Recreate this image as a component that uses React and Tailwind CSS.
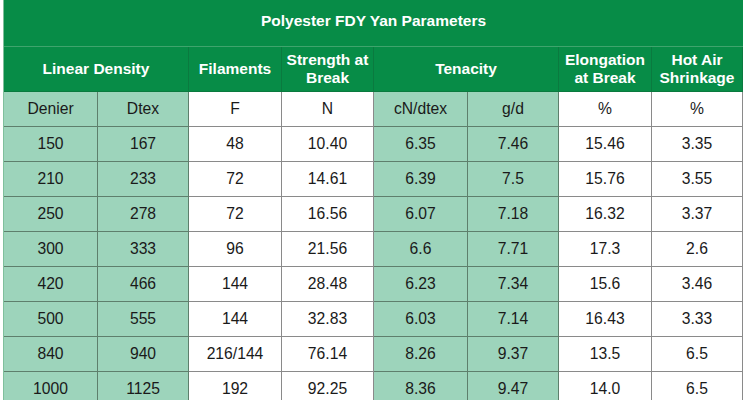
import React from "react";

const rows = [
  ["150", "167", "48", "10.40", "6.35", "7.46", "15.46", "3.35"],
  ["210", "233", "72", "14.61", "6.39", "7.5", "15.76", "3.55"],
  ["250", "278", "72", "16.56", "6.07", "7.18", "16.32", "3.37"],
  ["300", "333", "96", "21.56", "6.6", "7.71", "17.3", "2.6"],
  ["420", "466", "144", "28.48", "6.23", "7.34", "15.6", "3.46"],
  ["500", "555", "144", "32.83", "6.03", "7.14", "16.43", "3.33"],
  ["840", "940", "216/144", "76.14", "8.26", "9.37", "13.5", "6.5"],
  ["1000", "1125", "192", "92.25", "8.36", "9.47", "14.0", "6.5"],
];

const green = [0, 1, 4, 5];

const hdr =
  "h-[45px] bg-[#078c47] border-r border-b border-[#0a7a3f] flex items-center justify-center text-center text-white font-bold text-[15.5px] leading-[18px]";

const gCell =
  "h-[35px] bg-[#9dd4bb] border-r border-b border-[#5e7f6c] flex items-center justify-center text-[#1a1a1a]";
const wCell =
  "h-[35px] bg-white border-r border-b border-[#8a8a8a] flex items-center justify-center text-[#1a1a1a]";

export default function App() {
  return (
    <div className="w-[750px] h-[400px] overflow-hidden bg-white font-['Liberation_Sans',Arial,sans-serif]">
      <div className="ml-[3px] w-[739px] border-l border-[#7fbf9c] grid grid-cols-[94px_91px_93px_92px_94px_91px_93px_91px] text-[15.7px] leading-[18px]">
        <div className="col-span-8 h-[47px] bg-[#078c47] border-b border-[#3fa46d] flex items-center justify-center pb-[4px] text-white font-bold text-[15.5px]">
          Polyester FDY Yan Parameters
        </div>

        <div className={"col-span-2 " + hdr}>Linear Density</div>
        <div className={hdr}>Filaments</div>
        <div className={hdr}>
          Strength at<br />Break
        </div>
        <div className={"col-span-2 " + hdr}>Tenacity</div>
        <div className={hdr}>
          Elongation<br />at Break
        </div>
        <div className={hdr}>
          Hot Air<br />Shrinkage
        </div>

        {["Denier", "Dtex", "F", "N", "cN/dtex", "g/d", "%", "%"].map((t, i) => (
          <div key={"h" + i} className={green.includes(i) ? gCell : wCell}>
            {t}
          </div>
        ))}

        {rows.map((r, ri) =>
          r.map((t, i) => (
            <div key={ri + "-" + i} className={green.includes(i) ? gCell : wCell}>
              {t}
            </div>
          ))
        )}
      </div>
    </div>
  );
}
